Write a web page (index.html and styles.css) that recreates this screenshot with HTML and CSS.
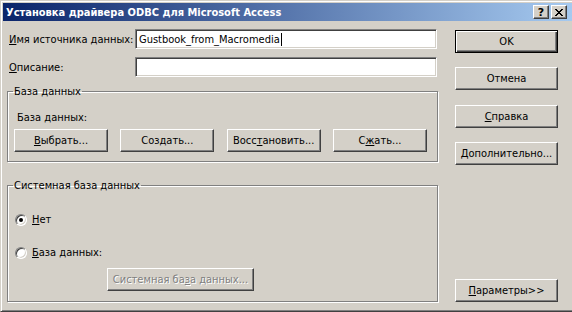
FILE: index.html
```html
<!DOCTYPE html>
<html lang="ru">
<head>
<meta charset="utf-8">
<title>Установка драйвера ODBC для Microsoft Access</title>
<link rel="stylesheet" href="styles.css">
</head>
<body>
<div class="window">
  <div class="titlebar">
    <span class="title">Установка драйвера ODBC для Microsoft Access</span>
    <div class="caption-buttons">
      <span class="cap-btn help">?</span>
      <span class="cap-btn close"><svg width="8" height="7" viewBox="0 0 8 7" shape-rendering="crispEdges"><path d="M0 0h2v1h-2zM6 0h2v1h-2zM1 1h2v1h-2zM5 1h2v1h-2zM2 2h4v1h-4zM3 3h2v1h-2zM2 4h4v1h-4zM1 5h2v1h-2zM5 5h2v1h-2zM0 6h2v1h-2zM6 6h2v1h-2z" fill="#000"/></svg></span>
    </div>
  </div>
  <div class="client">
    <div class="main">
      <div class="field">
        <label class="field-label"><u>И</u>мя источника данных:</label>
        <div class="input">Gustbook_from_Macromedia<span class="caret"></span></div>
      </div>
      <div class="field field-second">
        <label class="field-label"><u>О</u>писание:</label>
        <div class="input"></div>
      </div>
      <fieldset class="group db-group">
        <legend>База данных</legend>
        <div class="sub-label">База данных:</div>
        <div class="db-buttons">
          <button class="btn"><u>В</u>ыбрать...</button>
          <button class="btn">Соз<u>д</u>ать...</button>
          <button class="btn">Восс<u>т</u>ановить...</button>
          <button class="btn">С<u>ж</u>ать...</button>
        </div>
      </fieldset>
      <fieldset class="group sys-group">
        <legend>Системная база данных</legend>
        <div class="radio-row"><span class="radio checked"></span><span><u>Н</u>ет</span></div>
        <div class="radio-row radio-second"><span class="radio"></span><span><u>Б</u>аза данных:</span></div>
        <button class="btn disabled">Системная ба<u>з</u>а данных...</button>
      </fieldset>
    </div>
    <div class="side">
      <button class="btn default">OK</button>
      <button class="btn side-cancel">Отмена</button>
      <button class="btn side-help"><u>С</u>правка</button>
      <button class="btn side-adv"><u>Д</u>ополнительно...</button>
      <button class="btn side-params"><u>П</u>араметры&gt;&gt;</button>
    </div>
  </div>
</div>
</body>
</html>
```
FILE: styles.css
```css
html, body {
  margin: 0;
  padding: 0;
  overflow: hidden;
}
body {
  background: #d4d0c8;
  font: 11px/13px "DejaVu Sans Condensed", "DejaVu Sans", sans-serif;
  color: #000;
}
u { text-decoration: underline; text-underline-offset: 1px; }

.window {
  box-sizing: border-box;
  width: 576px;
  height: 312px;
  border: 1px solid;
  border-color: #d4d0c8 #404040 #404040 #d4d0c8;
  box-shadow: inset 1px 1px #fff, inset -1px -1px #808080;
  padding: 2px;
  display: flex;
  flex-direction: column;
  background: #d4d0c8;
}

.titlebar {
  height: 18px;
  flex: none;
  display: flex;
  align-items: center;
  justify-content: space-between;
  background: linear-gradient(to right, #0a246a, #a6caf0);
  padding: 0 6px 0 3px;
}
.title {
  color: #fff;
  font-weight: bold;
  white-space: nowrap;
}
.caption-buttons {
  display: flex;
  gap: 2px;
}
.cap-btn {
  box-sizing: border-box;
  width: 16px;
  height: 14px;
  border: 1px solid;
  border-color: #fff #404040 #404040 #fff;
  box-shadow: inset -1px -1px #808080;
  background: #d4d0c8;
  display: flex;
  align-items: center;
  justify-content: center;
}
.cap-btn.help {
  font-weight: bold;
  font-size: 11px;
  line-height: 11px;
  font-family: "DejaVu Sans", sans-serif;
}

.client {
  flex: 1;
  display: flex;
  gap: 17px;
  padding: 8px 0 7px 4px;
}
.main {
  width: 431px;
  display: flex;
  flex-direction: column;
}
.field {
  display: flex;
  align-items: center;
  height: 20px;
}
.field-second { margin-top: 8px; }
.field-label {
  box-sizing: border-box;
  width: 128px;
  padding-left: 2px;
  white-space: nowrap;
}
.input {
  box-sizing: border-box;
  width: 302px;
  height: 20px;
  border: 1px solid;
  border-color: #808080 #fff #fff #808080;
  box-shadow: inset 1px 1px #404040, inset -1px -1px #d4d0c8;
  background: #fff;
  padding-left: 3px;
  display: flex;
  align-items: center;
  white-space: nowrap;
}
.caret {
  width: 1px;
  height: 13px;
  background: #000;
  margin-left: 1px;
}

.group {
  margin: 0;
  padding: 0;
  min-width: 0;
  border: 1px solid #808080;
  box-shadow: inset 1px 1px #fff, 1px 1px #fff;
}
.group legend {
  margin-left: 5px;
  padding: 0 1px;
  line-height: 13px;
}
.db-group {
  margin-top: 8px;
  padding-bottom: 9px;
}
.sub-label {
  margin: 13px 0 0 9px;
}
.db-buttons {
  margin: 5px 0 0 6px;
  width: 413px;
  display: flex;
  justify-content: space-between;
}
.db-buttons .btn { width: 94px; }

.sys-group {
  margin-top: 17px;
  padding-bottom: 10px;
}
.radio-row {
  display: flex;
  align-items: flex-start;
  gap: 5px;
  margin: 21px 0 0 7px;
  height: 13px;
}
.radio-second { margin-top: 20px; }
.radio {
  box-sizing: border-box;
  width: 12px;
  height: 12px;
  margin-top: 1px;
  border-radius: 50%;
  border: 1px solid;
  border-color: #808080 #fff #fff #808080;
  box-shadow: inset 1px 1px #404040, inset -1px -1px #d4d0c8;
  background: #fff;
  display: flex;
  align-items: center;
  justify-content: center;
}
.radio.checked::after {
  content: "";
  width: 4px;
  height: 4px;
  border-radius: 50%;
  background: #000;
}

.btn {
  box-sizing: border-box;
  height: 23px;
  margin: 0;
  padding: 0;
  font: inherit;
  color: #000;
  background: #d4d0c8;
  border: 1px solid;
  border-color: #fff #404040 #404040 #fff;
  box-shadow: inset -1px -1px #808080;
  text-align: center;
  white-space: nowrap;
}
.btn.disabled {
  margin: 9px 0 0 99px;
  width: 147px;
  color: #808080;
  text-shadow: 1px 1px #fff;
}

.side {
  width: 103px;
  display: flex;
  flex-direction: column;
}
.side .btn { width: 103px; }
.btn.default {
  margin-top: 1px;
  border: 1px solid #000;
  box-shadow: inset 1px 1px #fff, inset -1px -1px #404040, inset -2px -2px #808080;
}
.side-cancel { margin-top: 14px; }
.side-help { margin-top: 15px; }
.side-adv { margin-top: 14px; }
.side-params { margin-top: auto; }
```
